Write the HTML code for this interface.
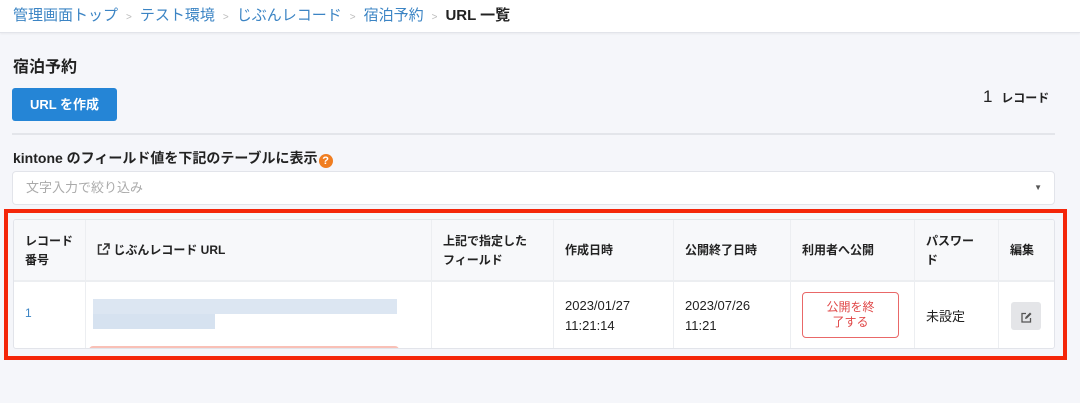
<!DOCTYPE html>
<html><head><meta charset="utf-8"><style>
*{box-sizing:border-box;margin:0;padding:0}
body{width:1080px;height:403px;background:#f5f6fa;font-family:"Liberation Sans","Noto Sans CJK JP",sans-serif;color:#222;position:relative;overflow:hidden}
.top{position:absolute;left:0;top:0;width:1080px;height:33px;background:#fff;border-bottom:1px solid #e2e4ea;box-shadow:0 1px 2px rgba(0,0,0,.05);font-size:15px;line-height:31px;padding-left:13px;white-space:nowrap}
.top a{color:#3b84c4;text-decoration:none}
.top .s{color:#bbb;font-size:10px;margin:0 8px}
.top b{font-weight:bold;color:#222}
.abs{position:absolute}
</style></head><body>
<div class="top"><a>管理画面トップ</a><span class="s">&gt;</span><a>テスト環境</a><span class="s">&gt;</span><a>じぶんレコード</a><span class="s">&gt;</span><a>宿泊予約</a><span class="s">&gt;</span><b>URL 一覧</b></div>
<div class="abs" style="left:13px;top:53px;font-size:16px;font-weight:bold">宿泊予約</div>
<div class="abs" style="left:12px;top:88px;width:105px;height:33px;background:#2585d6;border-radius:3px;color:#fff;font-size:13px;font-weight:bold;text-align:center;line-height:33px">URL を作成</div>
<div class="abs" style="left:983px;top:87px;font-size:17px;white-space:nowrap">1 <span style="font-size:12px;font-weight:bold;margin-left:4px">レコード</span></div>
<div class="abs" style="left:12px;top:133px;width:1043px;height:2px;background:#e3e5ea"></div>
<div class="abs" style="left:13px;top:148px;font-size:14px;font-weight:bold;white-space:nowrap">kintone のフィールド値を下記のテーブルに表示<span style="display:inline-block;width:14px;height:14px;border-radius:50%;background:#f07d20;color:#fff;font-size:11px;text-align:center;line-height:14px;vertical-align:-1px;margin-left:1px">?</span></div>
<div class="abs" style="left:12px;top:171px;width:1043px;height:34px;background:#fff;border:1px solid #e2e4ea;border-radius:4px;font-size:13px;color:#aaa;line-height:32px;padding-left:13px">文字入力で絞り込み<span style="position:absolute;right:12px;top:0;color:#555;font-size:8px">▼</span></div>
<div class="abs" style="left:4px;top:209px;width:1063px;height:151px;border:4px solid #f4260a"></div>
<div class="abs" style="left:13px;top:219px;width:1042px;height:130px;background:#fff;border:1px solid #e2e4ea;border-radius:3px;overflow:hidden">
<div class="abs" style="left:0;top:0;width:1042px;height:62px;background:#f7f8fa;border-bottom:2px solid #eceef1"></div>
<div class="abs" style="left:71px;top:0;width:1px;height:130px;background:#eceef1"></div>
<div class="abs" style="left:417px;top:0;width:1px;height:130px;background:#eceef1"></div>
<div class="abs" style="left:539px;top:0;width:1px;height:130px;background:#eceef1"></div>
<div class="abs" style="left:659px;top:0;width:1px;height:130px;background:#eceef1"></div>
<div class="abs" style="left:776px;top:0;width:1px;height:130px;background:#eceef1"></div>
<div class="abs" style="left:900px;top:0;width:1px;height:130px;background:#eceef1"></div>
<div class="abs" style="left:984px;top:0;width:1px;height:130px;background:#eceef1"></div>
<div style="font-size:12px;font-weight:bold;line-height:19px">
<div class="abs" style="left:11px;top:12px">レコード<br>番号</div>
<div class="abs" style="left:83px;top:21px;white-space:nowrap"><svg width="13" height="12" viewBox="0 0 13 12" style="vertical-align:-1px"><path d="M5 2H1.5v9h9V7.5" fill="none" stroke="#333" stroke-width="1.5"/><path d="M7 1h5v5M12 1L6 7" fill="none" stroke="#333" stroke-width="1.5"/></svg> じぶんレコード URL</div>
<div class="abs" style="left:429px;top:12px">上記で指定した<br>フィールド</div>
<div class="abs" style="left:551px;top:21px">作成日時</div>
<div class="abs" style="left:671px;top:21px">公開終了日時</div>
<div class="abs" style="left:788px;top:21px">利用者へ公開</div>
<div class="abs" style="left:912px;top:12px">パスワー<br>ド</div>
<div class="abs" style="left:996px;top:21px">編集</div>
</div>
<div class="abs" style="left:11px;top:86px;font-size:12px;color:#3b84c4">1</div>
<div class="abs" style="left:79px;top:79px;width:304px;height:15px;background:#dce6f2"></div>
<div class="abs" style="left:79px;top:94px;width:122px;height:15px;background:#d6e2f0"></div>
<div class="abs" style="left:75px;top:126px;width:310px;height:4px;background:#f9c0b6;border-radius:4px 4px 0 0"></div>
<div class="abs" style="left:551px;top:76px;font-size:13px;line-height:20px">2023/01/27<br>11:21:14</div>
<div class="abs" style="left:671px;top:76px;font-size:13px;line-height:20px">2023/07/26<br>11:21</div>
<div class="abs" style="left:788px;top:72px;width:97px;height:46px;border:1px solid #e96868;border-radius:4px;color:#e04848;font-size:12px;line-height:15px;text-align:center;padding-top:7px">公開を終<br>了する</div>
<div class="abs" style="left:912px;top:86px;font-size:13px">未設定</div>
<div class="abs" style="left:997px;top:82px;width:30px;height:28px;background:#e4e5e8;border-radius:3px;text-align:center;padding-top:8px"><svg width="11" height="11" viewBox="0 0 11 11"><path d="M5 1.5H1v8.5h8.5V6" fill="none" stroke="#555" stroke-width="1.3"/><path d="M4 7l.5-2L9 .5 10.5 2 6 6.5z" fill="#555"/></svg></div>
</div>
</body></html>
